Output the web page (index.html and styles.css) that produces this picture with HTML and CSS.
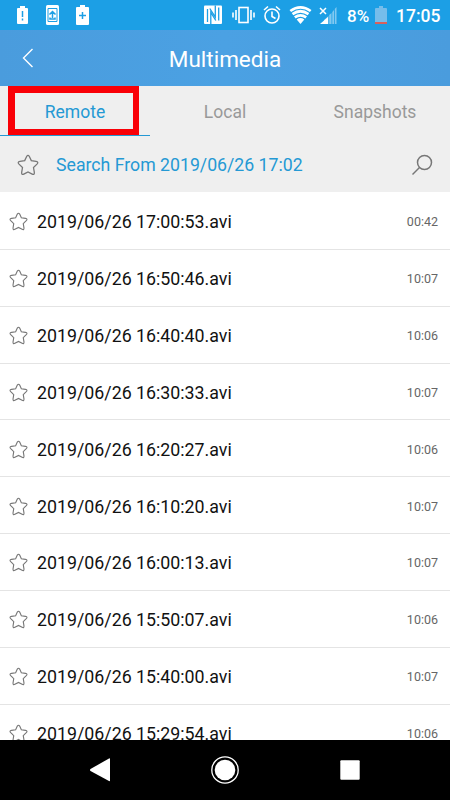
FILE: index.html
```html
<!DOCTYPE html>
<html lang="en">
<head>
<meta charset="utf-8">
<title>Multimedia</title>
<link rel="stylesheet" href="styles.css">
</head>
<body>
<svg class="defs" aria-hidden="true">
  <symbol id="star" viewBox="0 0 24 24"><path d="M10.500 2.700Q12 .3 13.500 2.700L15.600 7.200L20.800 8Q24 8.700 21.800 11L18 14.800L18.900 20Q19.200 23.200 16.600 21.900L12 19.500L7.400 21.900Q4.800 23.200 5.100 20L6 14.800L2.200 11Q0 8.700 3.200 8L8.400 7.200Z"/></symbol>
</svg>
<div class="phone">
  <header class="status">
    <svg class="notices" viewBox="0 0 100 30">
      <g fill="#fff">
        <path d="M20 6h5v2h2q1 0 1 1v14q0 1-1 1H18q-1 0-1-1V9q0-1 1-1h2z"/>
        <rect x="46" y="5" width="13" height="20" rx="1.5"/>
        <path d="M80 5h5v2h3q1 0 1 1v16q0 1-1 1H77q-1 0-1-1V8q0-1 1-1h3z"/>
      </g>
      <g fill="none" stroke="#1c9fe5" stroke-width="1.5">
        <path d="M22.500 11v6M22.500 18.500v2M82.500 12v7M79 15.500h7"/>
        <path d="M48 8.500h9v13h-9z" stroke-width="1"/>
        <path d="M52.500 18v-6M49.500 14.500l3-3 3 3M50 17.500v1.500h5v-1.500"/>
      </g>
    </svg>
    <svg class="radios" viewBox="0 0 140 30">
      <rect x="4" y="5.500" width="18" height="18.500" rx="1" fill="#fff"/>
      <path d="M7.500 22V9M10.800 24V12.500l5 8M18.700 7.500v13M15.300 5.500V17l-5.500-8.500" fill="none" stroke="#1c9fe5" stroke-width="1.300"/>
      <g fill="none" stroke="#fff" stroke-width="1.600">
        <rect x="39" y="7.500" width="9" height="15"/>
        <path d="M36 10v10M33 12.500v5M51 10v10M54 12.500v5"/>
        <circle cx="72" cy="16" r="7"/>
        <path d="M72 11.500v5l3.500 2M64 10l4-3.500M80 10l-4-3.500"/>
      </g>
      <path fill="#fff" d="M100.500 24L96.700 19.400Q100.500 16.500 104.300 19.400Z"/>
      <g fill="none" stroke="#fff" stroke-width="2.700">
        <path d="M94.800 17.400Q100.500 13.200 106.200 17.400M92.500 14.200Q100.500 8.300 108.500 14.200M90.300 11Q100.500 3.800 110.700 11"/>
      </g>
      <path d="M124 20l4.500-4v8H124zM129.200 24v-9l2.300-2v11zM132.300 24V12l1.700-2v14zM134.800 24V9l1.700-2v17z" fill="#81c9f1"/>
      <path d="M120 24l8-7v7z" fill="#fff"/>
      <path d="M120 8l6 6M126 8l-6 6" stroke="#fff" stroke-width="1.500"/>
    </svg>
    <span class="percent">8%</span>
    <svg class="battery" viewBox="0 0 12 18"><path d="M4 0h4v2h3q1 0 1 1v15H0V3q0-1 1-1h3z" fill="#75bdeb"/><path d="M0 16h12v2H0z" fill="#d8605c"/></svg>
    <span class="clock">17:05</span>
  </header>
  <div class="titlebar">
    <svg class="back" viewBox="0 0 12 20"><path d="M10.500 1L1.500 10l9 9"/></svg>
    <h1>Multimedia</h1>
  </div>
  <nav class="tabs">
    <div class="tab active"><span>Remote</span><i class="highlight"></i></div>
    <div class="tab"><span>Local</span></div>
    <div class="tab"><span>Snapshots</span></div>
  </nav>
  <div class="search">
    <svg class="star-large"><use href="#star"/></svg>
    <span class="query">Search From 2019/06/26 17:02</span>
    <svg class="lens" viewBox="0 0 22 22"><circle cx="13.500" cy="8.500" r="7"/><path d="M8.500 13.500L1.500 20.500"/></svg>
  </div>
  <main class="files">
    <div class="file"><svg class="star"><use href="#star"/></svg><span class="name">2019/06/26 17:00:53.avi</span><span class="length">00:42</span></div>
    <div class="file"><svg class="star"><use href="#star"/></svg><span class="name">2019/06/26 16:50:46.avi</span><span class="length">10:07</span></div>
    <div class="file"><svg class="star"><use href="#star"/></svg><span class="name">2019/06/26 16:40:40.avi</span><span class="length">10:06</span></div>
    <div class="file"><svg class="star"><use href="#star"/></svg><span class="name">2019/06/26 16:30:33.avi</span><span class="length">10:07</span></div>
    <div class="file"><svg class="star"><use href="#star"/></svg><span class="name">2019/06/26 16:20:27.avi</span><span class="length">10:06</span></div>
    <div class="file"><svg class="star"><use href="#star"/></svg><span class="name">2019/06/26 16:10:20.avi</span><span class="length">10:07</span></div>
    <div class="file"><svg class="star"><use href="#star"/></svg><span class="name">2019/06/26 16:00:13.avi</span><span class="length">10:07</span></div>
    <div class="file"><svg class="star"><use href="#star"/></svg><span class="name">2019/06/26 15:50:07.avi</span><span class="length">10:06</span></div>
    <div class="file"><svg class="star"><use href="#star"/></svg><span class="name">2019/06/26 15:40:00.avi</span><span class="length">10:07</span></div>
    <div class="file"><svg class="star"><use href="#star"/></svg><span class="name">2019/06/26 15:29:54.avi</span><span class="length">10:06</span></div>
  </main>
  <footer class="navbar">
    <svg viewBox="0 0 30 30"><path d="M5.500 14L24 3.500Q25 3 25 4v21.500Q25 26.500 24 26L5.500 16Q4.500 15 5.500 14z"/></svg>
    <svg viewBox="0 0 30 30"><circle cx="15" cy="15" r="10.300"/><circle class="ring" cx="15" cy="15" r="13.200"/></svg>
    <svg viewBox="0 0 30 30"><rect x="5.300" y="5.300" width="19.400" height="19.400" rx="1"/></svg>
  </footer>
</div>
</body>
</html>
```
FILE: styles.css
```css
* { box-sizing: border-box; }
body { margin: 0; font-family: Roboto, "Liberation Sans", sans-serif; }
.defs { position: absolute; width: 0; height: 0; }
.phone { width: 450px; height: 800px; display: flex; flex-direction: column; overflow: hidden; background: #fff; }

.status { height: 30px; flex: none; display: flex; align-items: center; background: #1c9fe5; color: #fff; font-size: 17.500px; font-weight: 500; line-height: 30px; }
.notices { width: 100px; height: 30px; }
.radios { width: 140px; height: 30px; margin-left: 100px; }
.percent { width: 28px; margin-left: 7px; padding-top: 1px; font-size: 17px; }
.battery { width: 12px; height: 18px; }
.clock { margin-left: 9px; padding-top: 1px; }

.titlebar { height: 56px; flex: none; display: grid; grid-template-columns: 75px 1fr 75px; align-items: center; background: linear-gradient(90deg, #4a9cdd, #4ba1e3 50%, #4a9cdd); }
.back { width: 12px; height: 20px; margin-left: 22px; fill: none; stroke: #fff; stroke-width: 1.4; }
h1 { margin: 2px 0 0; color: #fff; text-align: center; font-size: 22.5px; font-weight: 400; line-height: 30px; }

.tabs { height: 50px; flex: none; display: flex; background: #efefef; }
.tab { position: relative; flex: 1; display: flex; align-items: center; justify-content: center; padding-top: 2px; color: #999; font-size: 17.500px; border-bottom: 1px solid #efefef; }
.tab.active { color: #2499d4; border-bottom-color: #2499d4; }
.highlight { position: absolute; left: 8px; top: 0; width: 131px; height: 49px; border: solid #f90007; border-width: 7px 6px 6px 7px; }

.search { height: 56px; flex: none; display: flex; align-items: center; padding: 2px 17px 0; background: #efefef; }
.star-large { width: 22px; height: 22px; fill: none; stroke: #777; stroke-width: 1.4; }
.query { flex: 1; margin-left: 17px; color: #2499d4; font-size: 17.700px; }
.lens { width: 22px; height: 22px; fill: none; stroke: #777; stroke-width: 1.500; }

.files { flex: 1; min-height: 0; overflow: hidden; padding-top: 1px; }
.file { height: 56.850px; display: flex; align-items: center; padding: 2px 12px 0 9px; border-bottom: 1px solid #e4e4e4; }
.star { width: 19px; height: 19px; fill: none; stroke: #777; stroke-width: 1.400; }
.name { flex: 1; margin-left: 9px; color: #111; font-size: 17.800px; }
.length { color: #666; font-size: 12.500px; }

.navbar { height: 60px; flex: none; display: flex; justify-content: center; align-items: center; gap: 95px; background: #000; }
.navbar svg { width: 30px; height: 30px; fill: #fff; }
.navbar .ring { fill: none; stroke: #fff; stroke-width: 1.300; }
```
